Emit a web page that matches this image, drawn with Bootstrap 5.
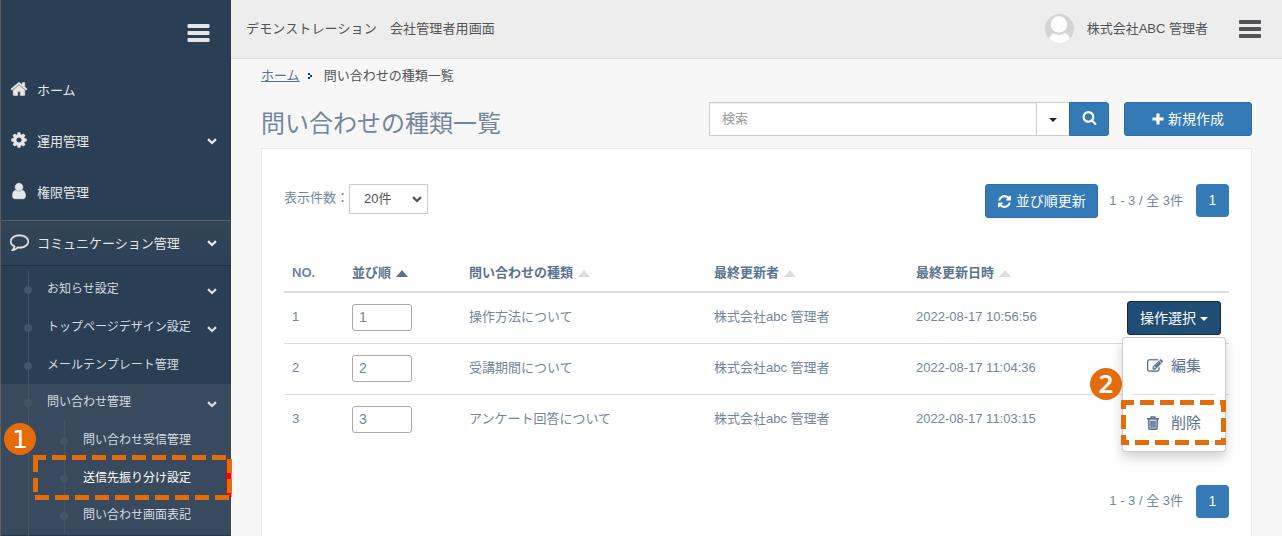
<!DOCTYPE html>
<html lang="ja">
<head>
<meta charset="utf-8">
<meta name="viewport" content="width=device-width, initial-scale=1">
<title>問い合わせの種類一覧</title>
<link rel="stylesheet" href="https://cdn.jsdelivr.net/npm/bootstrap@5.3.0/dist/css/bootstrap.min.css">
<style>
body{font-family:"Liberation Sans","Noto Sans CJK JP",sans-serif;font-size:13px;line-height:20px;color:#73879c;background:#f7f7f7;height:536px;overflow:hidden;position:relative}
svg{display:block;flex:none}
.ico{fill:currentColor}
.side{width:231px;height:536px;background:#2a3f54;border-left:1px solid #5f5f5f;color:#e7e7e7;overflow:hidden;flex:none}
.side-top{height:65px;padding:24px 21px 0 0}
.m-item{height:51px;padding:0 14px 0 9px}
.m-item .glyph{width:27px;padding-bottom:4px}
.m-item.current{height:46px;margin-top:2px;padding-top:1px;border-top:1px solid #566573;border-bottom:1px solid #1e3042;background:linear-gradient(#334556,#2c4257)}
.sub{padding-top:4px;font-size:12px;color:#d5dbe1;position:relative}
.s-item{height:38px;padding:0 14px 0 46px;position:relative}
.s-item::before{content:"";position:absolute;left:23px;top:16px;width:8px;height:8px;border-radius:50%;background:#425668}
.sub::before,.deep::before{content:"";position:absolute;left:27px;top:5px;bottom:0;border-left:1px solid #425668}
.opened{background:#394a5e;height:152px;border-bottom:1px solid #22364a}
.opened>.s-item{height:36px}
.opened>.s-item::before{top:15px}
.deep{position:relative;padding-top:1px}
.deep::before{left:63px;top:1px}
.deep .s-item{padding-left:82px;height:37.700px}
.deep .s-item::before{left:59px}
.topbar{height:59px;background:#ededed;border-bottom:1px solid #d9dee4;color:#515356;padding:0 21px 1px 15px}
.topbar .site{letter-spacing:.13px}
.topbar .avatar{margin-right:13px}
.topbar .user-name{margin-right:31px}
.work{padding:0 30px}
.crumbs{height:35px;padding-bottom:2px;color:#515356}
.crumbs a{color:#5a738e}
.title-row{height:54px}
.title-row h1{font-size:24px;font-weight:400;line-height:34px;padding-top:5px;color:#73879c}
.find{width:400px;height:34px}
.find .form-control{border:1px solid #ccc;border-radius:0;font-size:13px;padding:6px 12px;box-shadow:inset 0 1px 1px rgba(0,0,0,.075)}
.find .form-control::placeholder{color:#999}
.btn{--bs-btn-font-size:14px;--bs-btn-line-height:20px;--bs-btn-padding-y:6px;--bs-btn-padding-x:12px;--bs-btn-border-radius:3px;height:34px;white-space:nowrap}
.btn-main{--bs-btn-color:#fff;--bs-btn-bg:#337ab7;--bs-btn-border-color:#2e6da4;--bs-btn-hover-color:#fff;--bs-btn-hover-bg:#286090}
.find .more{width:32px;background:#fff;border:1px solid #ccc;border-left:0;border-right:0;border-radius:0;padding:0}
.find .go{width:40px;padding:0 0 3px;border-radius:0 3px 3px 0}
.create{width:128px;margin-left:15px;padding-bottom:7px}
.renew{width:113px;margin-right:11px;padding-left:11px;padding-right:12px}
.tri{display:inline-block;border:4px solid transparent;border-top-color:currentColor;border-bottom:0}
.sheet{background:#fff;border:1px solid #e6e9ed;border-bottom:0;height:388px;padding:35px 22px 0 22px}
.tools{height:34px}
.count{width:79px;height:30px;border:1px solid #ccc;color:#555;padding:0 5px 0 14px}
.pg{width:33px;height:33px;border-radius:4px;background:#337ab7;color:#fff;font-size:14px;margin-left:13px;padding-bottom:1px}
.list-tbl{--bs-table-color:#73879c;--bs-table-bg:transparent;table-layout:fixed;width:945px;margin:37px 0 0;border-color:#ddd}
.list-tbl th{height:37px;padding:0 8px;line-height:36px;border-bottom:2px solid #ddd;color:#5a738e;white-space:nowrap}
.list-tbl td{height:51px;padding:8px;line-height:32px;border-bottom:1px solid #ddd;vertical-align:top;white-space:nowrap}
.list-tbl tbody tr:last-child td{border-bottom:0}
.list-tbl th:first-child{color:#73879c}
.sort{display:inline-block;border:6.500px solid transparent;border-top:0;border-bottom:7.500px solid #ddd;margin-left:5px}
.sort.on{border-bottom-color:#5a738e}
.ord{width:60px;height:27px;border:1px solid #aaa;border-radius:3px;padding:0 6px;line-height:24px;margin-top:3px;font-size:14px}
.op{--bs-btn-color:#fff;--bs-btn-bg:#204d74;--bs-btn-border-color:#122b40;float:right;padding-top:5px}
.op-menu{left:1122px;top:337px;width:104px;height:115px;border:1px solid rgba(0,0,0,.2);border-radius:4px;box-shadow:0 6px 12px rgba(0,0,0,.175);font-size:15px;color:#5a738e;background:#fff;position:absolute}
.op-menu .act{height:56px;padding-left:24px}
.op-menu .act svg{width:16px;margin-right:8px}
.op-menu .act .bin{width:12px;margin-right:12px}
.op-menu hr{margin:0 10px;border-top:1px solid #ddd;opacity:1}
.note{position:absolute;fill:none;stroke:#e46c0a;stroke-width:5}
.num{position:absolute;width:32px;height:32px;border-radius:50%;background:#e46c0a;color:#fff;font:25px/33px "DejaVu Sans",sans-serif;text-align:center}
.num-b{font-family:"Noto Sans",sans-serif;font-weight:600;font-size:26px;line-height:30px}
.foot-pg{margin-top:39px}
</style>
</head>
<body>
<svg width="0" height="0" class="position-absolute">
<symbol id="bars" viewBox="0 0 22 18"><rect width="22" height="4" rx="1"/><rect y="7" width="22" height="4" rx="1"/><rect y="14" width="22" height="4" rx="1"/></symbol>
<symbol id="down" viewBox="0 0 10 7"><path d="M1 1.200 5 5 9 1.200" fill="none" stroke="currentColor" stroke-width="2.300"/></symbol>
<symbol id="home" viewBox="0 0 1792 1792"><path d="M1472 992v480q0 26-19 45t-45 19h-384v-384h-256v384h-384q-26 0-45-19t-19-45v-480q0-1 .5-3t.5-3l575-474 575 474q1 2 1 6zm223-69l-62 74q-8 9-21 11h-3q-13 0-21-7l-692-577-692 577q-12 8-24 7-13-2-21-11l-62-74q-8-10-7-23.500t11-21.500l719-599q32-26 76-26t76 26l244 204v-195q0-14 9-23t23-9h192q14 0 23 9t9 23v408l219 182q10 8 11 21.500t-7 23.500z" stroke="currentColor" stroke-width="50"/></symbol>
<symbol id="cog" viewBox="0 0 1792 1792"><path d="M1152 896q0-106-75-181t-181-75-181 75-75 181 75 181 181 75 181-75 75-181zm512-109v222q0 12-8 23t-20 13l-185 28q-19 54-39 91 35 50 107 138 10 12 10 25t-9 23q-27 37-99 108t-94 71q-12 0-26-9l-138-108q-44 23-91 38-16 136-29 186-7 28-36 28h-222q-14 0-24.500-8.500t-11.500-21.500l-28-184q-49-16-90-37l-141 107q-10 9-25 9-14 0-25-11-126-114-165-168-7-10-7-23 0-12 8-23 15-21 51-66.500t54-70.500q-27-50-41-99l-183-27q-13-2-21-12.500t-8-23.500v-222q0-12 8-23t19-13l186-28q14-46 39-92-40-57-107-138-10-12-10-24 0-10 9-23 26-36 98.500-107.500t94.500-71.500q13 0 26 10l138 107q44-23 91-38 16-136 29-186 7-28 36-28h222q14 0 24.500 8.500t11.500 21.500l28 184q49 16 90 37l142-107q9-9 24-9 13 0 25 10 129 119 165 170 7 8 7 22 0 12-8 23-15 21-51 66.500t-54 70.500q26 50 41 98l183 28q13 2 21 12.500t8 23.500z"/></symbol>
<symbol id="user" viewBox="0 0 1792 1792"><path d="M1536 1399q0 109-62.500 187t-150.500 78h-854q-88 0-150.500-78t-62.500-187q0-85 8.500-160.500t31.500-152 58.500-131 94-89 134.500-34.500q131 128 313 128t313-128q76 0 134.500 34.500t94 89 58.500 131 31.500 152 8.500 160.500zm-256-887q0 159-112.500 271.500t-271.500 112.500-271.500-112.500-112.500-271.500 112.500-271.500 271.500-112.500 271.500 112.500 112.500 271.500z" stroke="currentColor" stroke-width="70"/></symbol>
<symbol id="talk" viewBox="0 0 1792 1792"><path d="M896 384q-204 0-381.500 69.500t-282 187.500-104.500 255q0 112 71.500 213.500t201.500 175.500l87 50-27 96q-24 91-70 172 152-63 275-171l43-38 57 6q69 8 130 8 204 0 381.500-69.500t282-187.500 104.500-255-104.500-255-282-187.500-381.500-69.500zm896 512q0 174-120 321.500t-326 233-450 85.500q-70 0-145-8-198 175-460 242-49 14-114 22h-5q-15 0-27-10.500t-16-27.500v-1q-3-4-.5-12t2-10 4.500-9.500l6-9 7-8.500 8-9q7-8 31-34.500t34.500-38 31-39.500 32.500-51 27-59 26-76q-157-89-247.500-220t-90.500-281q0-174 120-321.500t326-233 450-85.500 450 85.500 326 233 120 321.500z" stroke="currentColor" stroke-width="50"/></symbol>
<symbol id="search" viewBox="0 0 1792 1792"><path d="M1216 832q0-185-131.500-316.500t-316.500-131.500-316.500 131.500-131.500 316.500 131.500 316.500 316.500 131.500 316.500-131.500 131.500-316.500zm512 832q0 52-38 90t-90 38q-54 0-90-38l-343-342q-179 124-399 124-143 0-273.500-55.500t-225-150-150-225-55.500-273.500 55.500-273.500 150-225 225-150 273.500-55.500 273.500 55.500 225 150 150 225 55.500 273.500q0 220-124 399l343 343q37 37 37 90z"/></symbol>
<symbol id="refresh" viewBox="0 0 1792 1792"><path d="M1639 1056q0 5-1 7-64 268-268 434.500t-478 166.500q-146 0-282.500-55t-243.500-157l-129 129q-19 19-45 19t-45-19-19-45v-448q0-26 19-45t45-19h448q26 0 45 19t19 45-19 45l-137 137q71 66 161 102t187 36q134 0 250-65t186-179q11-17 53-117 8-23 30-23h192q13 0 22.500 9.500t9.500 22.500zm25-800v448q0 26-19 45t-45 19h-448q-26 0-45-19t-19-45 19-45l138-138q-148-137-349-137-134 0-250 65t-186 179q-11 17-53 117-8 23-30 23h-199q-13 0-22.500-9.500t-9.500-22.500v-7q65-268 270-434.500t480-166.500q146 0 284 55.500t245 156.500l130-129q19-19 45-19t45 19 19 45z"/></symbol>
<symbol id="edit" viewBox="0 0 1792 1792"><path d="M888 1184l116-116-152-152-116 116v56h96v96h56zm440-720q-16-16-33 1l-350 350q-17 17-1 33t33-1l350-350q17-17 1-33zm80 594v190q0 119-84.500 203.500t-203.500 84.500h-832q-119 0-203.500-84.500t-84.500-203.500v-832q0-119 84.500-203.500t203.500-84.500h832q63 0 117 25 15 7 18 23 3 17-9 29l-49 49q-14 14-32 8-23-6-45-6h-832q-66 0-113 47t-47 113v832q0 66 47 113t113 47h832q66 0 113-47t47-113v-126q0-13 9-22l64-64q15-15 35-7t20 29zm-96-738l288 288-672 672h-288v-288zm444 132l-92 92-288-288 92-92q28-28 68-28t68 28l152 152q28 28 28 68t-28 68z" stroke="currentColor" stroke-width="30"/></symbol>
<symbol id="trash" viewBox="0 0 12 14"><path d="M0 2.800h12M4 2.500V1h4v1.500M1.800 3v9.200q0 1.100 1 1.100h6.400q1 0 1-1.100V3M4.200 5v6.500M6 5v6.500M7.800 5v6.500" fill="none" stroke="currentColor" stroke-width="1.400"/><path d="M2 3h8v10H2z" fill="currentColor" fill-opacity=".35"/></symbol>
</svg>

<div class="d-flex">
  <nav class="side">
    <div class="side-top d-flex justify-content-end"><svg class="ico" width="23" height="18" preserveAspectRatio="none"><use href="#bars"/></svg></div>
    <div class="m-item d-flex align-items-center"><span class="glyph"><svg class="ico" width="18" height="18"><use href="#home"/></svg></span>ホーム</div>
    <div class="m-item d-flex align-items-center"><span class="glyph"><svg class="ico" width="18" height="18"><use href="#cog"/></svg></span>運用管理<svg class="ms-auto" width="10" height="7"><use href="#down"/></svg></div>
    <div class="m-item d-flex align-items-center"><span class="glyph"><svg class="ico" width="18" height="18"><use href="#user"/></svg></span>権限管理</div>
    <div class="m-item current d-flex align-items-center"><span class="glyph"><svg class="ico" width="19" height="19"><use href="#talk"/></svg></span>コミュニケーション管理<svg class="ms-auto" width="10" height="7"><use href="#down"/></svg></div>
    <div class="sub">
      <div class="s-item d-flex align-items-center">お知らせ設定<svg class="ms-auto mt-1" width="10" height="7"><use href="#down"/></svg></div>
      <div class="s-item d-flex align-items-center">トップページデザイン設定<svg class="ms-auto mt-1" width="10" height="7"><use href="#down"/></svg></div>
      <div class="s-item d-flex align-items-center">メールテンプレート管理</div>
      <div class="opened">
        <div class="s-item d-flex align-items-center">問い合わせ管理<svg class="ms-auto mt-1" width="10" height="7"><use href="#down"/></svg></div>
        <div class="deep">
          <div class="s-item d-flex align-items-center">問い合わせ受信管理</div>
          <div class="s-item d-flex align-items-center text-white">送信先振り分け設定</div>
          <div class="s-item d-flex align-items-center">問い合わせ画面表記</div>
        </div>
      </div>
    </div>
  </nav>

  <div class="flex-grow-1">
    <header class="topbar d-flex align-items-center">
      <span class="site">デモンストレーション　会社管理者用画面</span>
      <svg class="ms-auto avatar" width="29" height="29" viewBox="0 0 29 29"><defs><clipPath id="face"><circle cx="14.500" cy="14.500" r="14.500"/></clipPath></defs><g clip-path="url(#face)"><rect width="29" height="29" fill="#d4d4d4"/><ellipse cx="14.500" cy="25.500" rx="10.500" ry="7.500" fill="#fff"/><circle cx="14" cy="11" r="10" fill="#d4d4d4"/><circle cx="14" cy="10.500" r="8.300" fill="#fff"/></g></svg>
      <span class="user-name">株式会社ABC 管理者</span>
      <svg class="ico" width="22" height="18"><use href="#bars"/></svg>
    </header>
    <main class="work">
      <div class="crumbs d-flex align-items-center"><a href="#">ホーム</a><svg class="mx-2" width="4" height="6" viewBox="0 0 4 6" shape-rendering="crispEdges"><path d="M0 0h2v2h2v2H2v2H0V4h2V2H0z" fill="#0b3c74"/></svg><span class="ms-1">問い合わせの種類一覧</span></div>
      <div class="title-row d-flex pt-2">
        <h1 class="mb-0 me-auto">問い合わせの種類一覧</h1>
        <div class="find d-flex">
          <input class="form-control" placeholder="検索">
          <button class="btn more flex-shrink-0"><span class="tri align-middle"></span></button>
          <button class="btn btn-main go flex-shrink-0 d-flex align-items-center justify-content-center"><svg class="ico" width="15" height="15"><use href="#search"/></svg></button>
        </div>
        <button class="btn btn-main create d-flex align-items-center justify-content-center"><svg class="me-1" width="12" height="12" viewBox="0 0 12 12"><path d="M6 .5v11M.5 6h11" stroke="#fff" stroke-width="3.200"/></svg>新規作成</button>
      </div>
      <section class="sheet">
        <div class="tools d-flex">
          <span class="pt-1">表示件数：</span>
          <div class="count d-flex align-items-center justify-content-between">20件<svg width="10" height="7"><use href="#down"/></svg></div>
          <div class="ms-auto d-flex align-items-center">
            <button class="btn btn-main renew d-flex align-items-center justify-content-center"><svg class="ico me-1" width="15" height="15"><use href="#refresh"/></svg>並び順更新</button>
            <span class="total">1 - 3 / 全 3件</span><span class="pg d-flex align-items-center justify-content-center align-self-start">1</span>
          </div>
        </div>
        <table class="table list-tbl">
          <colgroup><col width="60"><col width="117"><col width="245"><col width="202"><col width="321"></colgroup>
          <thead><tr><th>NO.</th><th>並び順<span class="sort on"></span></th><th>問い合わせの種類<span class="sort"></span></th><th>最終更新者<span class="sort"></span></th><th>最終更新日時<span class="sort"></span></th></tr></thead>
          <tbody>
            <tr><td>1</td><td><div class="ord">1</div></td><td>操作方法について</td><td>株式会社abc 管理者</td><td>2022-08-17 10:56:56<button class="btn op">操作選択<span class="tri align-middle ms-1"></span></button></td></tr>
            <tr><td>2</td><td><div class="ord">2</div></td><td>受講期間について</td><td>株式会社abc 管理者</td><td>2022-08-17 11:04:36</td></tr>
            <tr><td>3</td><td><div class="ord">3</div></td><td>アンケート回答について</td><td>株式会社abc 管理者</td><td>2022-08-17 11:03:15</td></tr>
          </tbody>
        </table>
        <div class="foot-pg d-flex justify-content-end align-items-center"><span class="total">1 - 3 / 全 3件</span><span class="pg d-flex align-items-center justify-content-center">1</span></div>
      </section>
    </main>
  </div>
</div>

<div class="op-menu">
  <div class="act d-flex align-items-center"><svg class="ico" height="16"><use href="#edit"/></svg>編集</div>
  <hr>
  <div class="act d-flex align-items-center"><svg class="bin" height="14"><use href="#trash"/></svg>削除</div>
</div>

<svg class="note" style="left:33px;top:455px" width="199" height="45">
  <path d="M196 4v38" stroke="red"/>
  <path d="M0 2.500H13M19 2.500H193" stroke-dasharray="14 6"/>
  <path d="M2.500 0V17M2.500 23V37"/>
  <path d="M2 42.500H196" stroke-dasharray="14 6"/>
  <path d="M196.500 4V18M196.500 24V38"/>
</svg>
<div class="num" style="left:4px;top:423px">1</div>
<svg class="note" style="left:1121px;top:400px" width="105" height="45">
  <path d="M0 2.500H13M19 2.500H105" stroke-dasharray="14 6"/>
  <path d="M0 42.500H8M14 42.500H105" stroke-dasharray="14 6"/>
  <path d="M2.500 0V9M2.500 15V29M2.500 35V45M102.500 0V12M102.500 18V32M102.500 38V45"/>
</svg>
<div class="num num-b" style="left:1090px;top:368px">2</div>
<script src="https://cdn.jsdelivr.net/npm/bootstrap@5.3.0/dist/js/bootstrap.bundle.min.js"></script>
</body>
</html>
